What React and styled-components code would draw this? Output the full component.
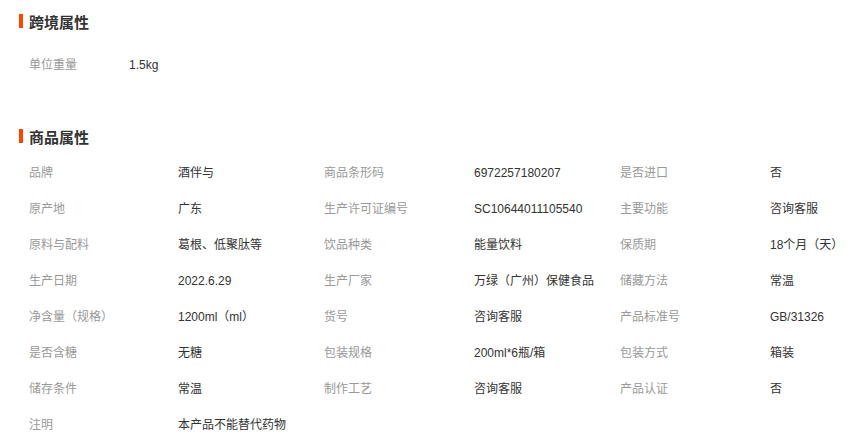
import React from 'react'
import styled, { createGlobalStyle } from 'styled-components'

const GlobalStyle = createGlobalStyle`
  body {
    margin: 0;
    background: #fff;
    font-family: "Liberation Sans", Arial, "Noto Sans CJK SC", sans-serif;
    font-size: 12px;
  }
`

const Page = styled.div`
  width: 860px;
  padding-top: 11px;
`

const Section = styled.section`
  margin-bottom: ${p => p.$gap || 0}px;
`

const Title = styled.h3`
  display: flex;
  align-items: center;
  gap: 6px;
  margin: 0 0 ${p => p.$after}px 19px;
  height: 20px;
  font-size: 15px;
  font-weight: bold;
  color: #333;
  font-family: "Noto Sans CJK SC", sans-serif;

  &::before {
    content: '';
    width: 4px;
    height: 14px;
    background: #ff4400;
  }
`

const Grid = styled.div`
  display: grid;
  grid-template-columns: ${p => p.$cols};
  padding: 1px 0 0 29px;
`

const Label = styled.div`
  height: 36px;
  line-height: 36px;
  color: #999;
  white-space: nowrap;
`

const Value = styled.div`
  height: 36px;
  line-height: 36px;
  color: #333;
  white-space: nowrap;
`

const cross = [['单位重量', '1.5kg']]

const goods = [
  ['品牌', '酒伴与'], ['商品条形码', '6972257180207'], ['是否进口', '否'],
  ['原产地', '广东'], ['生产许可证编号', 'SC10644011105540'], ['主要功能', '咨询客服'],
  ['原料与配料', '葛根、低聚肽等'], ['饮品种类', '能量饮料'], ['保质期', '18个月（天）'],
  ['生产日期', '2022.6.29'], ['生产厂家', '万绿（广州）保健食品'], ['储藏方法', '常温'],
  ['净含量（规格）', '1200ml（ml）'], ['货号', '咨询客服'], ['产品标准号', 'GB/31326'],
  ['是否含糖', '无糖'], ['包装规格', '200ml*6瓶/箱'], ['包装方式', '箱装'],
  ['储存条件', '常温'], ['制作工艺', '咨询客服'], ['产品认证', '否'],
  ['注明', '本产品不能替代药物'],
]

const Pairs = ({ items }) =>
  items.map(([k, v]) => (
    <React.Fragment key={k}>
      <Label>{k}</Label>
      <Value>{v}</Value>
    </React.Fragment>
  ))

export default function App() {
  return (
    <Page>
      <GlobalStyle />
      <Section $gap={43}>
        <Title $after={15}>跨境属性</Title>
        <Grid $cols="100px 1fr">
          <Pairs items={cross} />
        </Grid>
      </Section>
      <Section>
        <Title $after={8}>商品属性</Title>
        <Grid $cols="149px 146px 150px 146px 150px 1fr">
          <Pairs items={goods} />
        </Grid>
      </Section>
    </Page>
  )
}
